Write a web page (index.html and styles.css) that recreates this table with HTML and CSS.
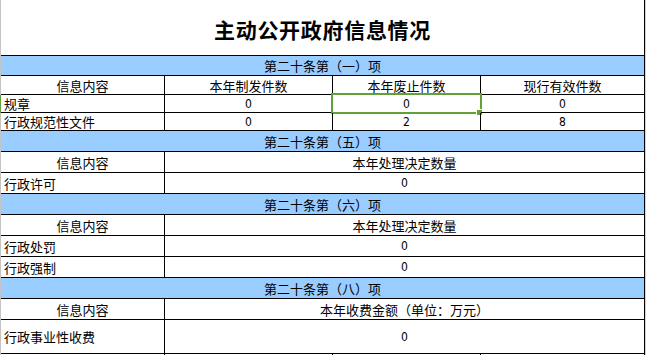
FILE: index.html
```html
<!DOCTYPE html>
<html lang="zh-CN">
<head>
<meta charset="utf-8">
<title>主动公开政府信息情况</title>
<link rel="stylesheet" href="styles.css">
</head>
<body>
<div class="sheet">
  <div class="row title-row"><div class="cell span-all title">主动公开政府信息情况</div></div>

  <div class="row band"><div class="cell span-all">第二十条第（一）项</div></div>
  <div class="row h19">
    <div class="cell">信息内容</div>
    <div class="cell">本年制发件数</div>
    <div class="cell">本年废止件数</div>
    <div class="cell">现行有效件数</div>
  </div>
  <div class="row h18 active">
    <div class="cell label">规章</div>
    <div class="cell num">0</div>
    <div class="cell num selected">0<span class="sel-box"><span class="sel-handle"></span></span></div>
    <div class="cell num">0</div>
  </div>
  <div class="row h18">
    <div class="cell label">行政规范性文件</div>
    <div class="cell num">0</div>
    <div class="cell num">2</div>
    <div class="cell num">8</div>
  </div>

  <div class="row band"><div class="cell span-all">第二十条第（五）项</div></div>
  <div class="row">
    <div class="cell">信息内容</div>
    <div class="cell span-rest">本年处理决定数量</div>
  </div>
  <div class="row">
    <div class="cell label">行政许可</div>
    <div class="cell num span-rest">0</div>
  </div>

  <div class="row band"><div class="cell span-all">第二十条第（六）项</div></div>
  <div class="row">
    <div class="cell">信息内容</div>
    <div class="cell span-rest">本年处理决定数量</div>
  </div>
  <div class="row">
    <div class="cell label">行政处罚</div>
    <div class="cell num span-rest">0</div>
  </div>
  <div class="row">
    <div class="cell label">行政强制</div>
    <div class="cell num span-rest">0</div>
  </div>

  <div class="row band"><div class="cell span-all">第二十条第（八）项</div></div>
  <div class="row">
    <div class="cell">信息内容</div>
    <div class="cell span-rest">本年收费金额（单位：万元）</div>
  </div>
  <div class="row tall">
    <div class="cell label">行政事业性收费</div>
    <div class="cell num span-rest">0</div>
  </div>

  <div class="row tail">
    <div class="cell"></div>
    <div class="cell"></div>
    <div class="cell"></div>
    <div class="cell"></div>
  </div>
</div>
</body>
</html>
```

FILE: styles.css
```css
html, body {
  margin: 0;
  padding: 0;
  background: #ffffff;
}

body {
  font-family: "Noto Sans CJK SC", "Noto Sans", sans-serif;
  font-size: 13px;
  color: #000000;
}

.sheet {
  width: 646px;
  height: 355px;
  box-sizing: border-box;
  border-right: 1px solid #d6d6d6;
  overflow: hidden;
}

.row {
  display: grid;
  grid-template-columns: 164px 168px 148px 164px;
  height: 21px;
  border-left: 1px solid #c4c4c4;
  box-sizing: content-box;
}

.row.active {
  border-left-color: #62a03a;
}

.row.h19 { height: 19px; }
.row.h18 { height: 18px; }
.row.tall { height: 34px; }
.row.title-row { height: 56px; }
.row.band { height: 20px; }
.row.band ~ .row.band { height: 21px; }
.row.tail { height: 20px; }

.cell {
  box-sizing: border-box;
  border-right: 1px solid #000000;
  border-bottom: 1px solid #000000;
  display: flex;
  align-items: center;
  justify-content: center;
  white-space: nowrap;
  line-height: 1;
  position: relative;
}

.tail .cell {
  border-bottom: none;
}

.span-all {
  grid-column: 1 / -1;
}

.span-rest {
  grid-column: 2 / -1;
}

.title {
  font-size: 21px;
  font-weight: 700;
  letter-spacing: 0.7px;
  padding-top: 3px;
}

.band .cell {
  background: #99ccff;
}

.label {
  justify-content: flex-start;
  padding-left: 3px;
}

.num {
  font-family: "Liberation Sans Narrow", "DejaVu Sans Condensed", "Liberation Sans", sans-serif;
  font-size: 12px;
}

.sel-box {
  position: absolute;
  left: -2px;
  top: -2px;
  width: 151px;
  height: 21px;
  box-sizing: border-box;
  border: 2px solid #62a03a;
}

.sel-handle {
  position: absolute;
  left: 144px;
  top: 15px;
  width: 5px;
  height: 5px;
  background: #62a03a;
  border-top: 1px solid #ffffff;
  border-left: 1px solid #ffffff;
  box-sizing: content-box;
  margin: -1px 0 0 -1px;
}
```
